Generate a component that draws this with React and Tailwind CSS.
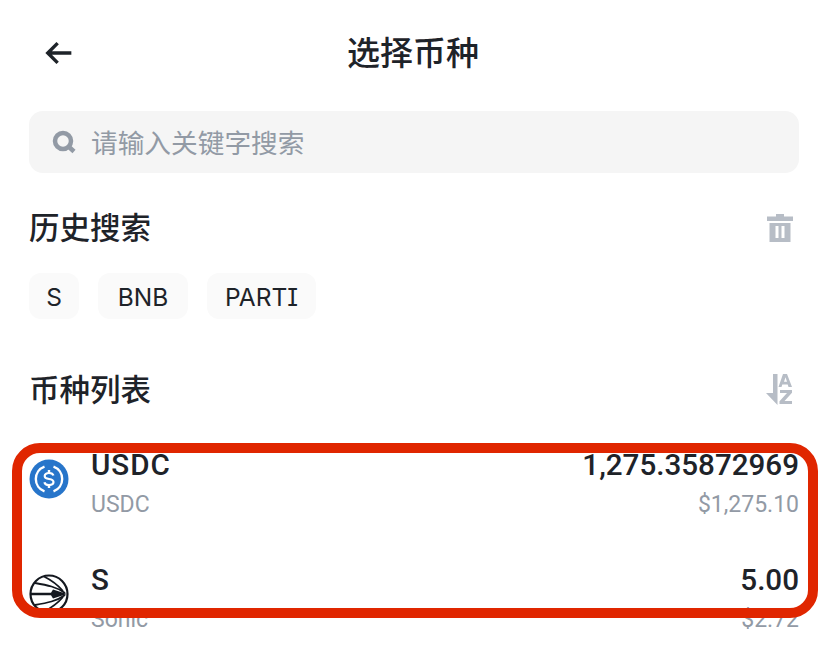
import React from 'react';

const cjk = "font-['Inter','Noto_Sans_CJK_SC',sans-serif]";

const UsdcIcon = () => (
  <svg viewBox="0 0 40 40" className="w-10 h-10 shrink-0">
    <circle cx="20" cy="20" r="19.5" fill="#2775ca" />
    <path d="M15.5 7.6a13.2 13.2 0 0 0 0 24.8" fill="none" stroke="#fff" strokeWidth="2.4" />
    <path d="M24.5 7.6a13.2 13.2 0 0 1 0 24.8" fill="none" stroke="#fff" strokeWidth="2.4" />
    <path d="M24.4 16.6c-.4-1.7-2-2.6-4.4-2.6-2.600 0-4.300 1.200-4.300 3 0 2 1.700 2.600 4.300 3 2.700.4 4.500 1.100 4.500 3.100 0 1.900-1.900 3-4.500 3-2.500 0-4.200-1-4.600-2.800" fill="none" stroke="#fff" strokeWidth="2.200" />
    <path d="M20 11v3M20 26v3" stroke="#fff" strokeWidth="2.400" />
  </svg>
);

const SonicIcon = () => (
  <svg viewBox="0 0 40 40" className="w-10 h-10 shrink-0">
    <circle cx="20" cy="20" r="18.500" fill="#fff" stroke="#14181f" strokeWidth="2.200" />
    <path d="M38 20 24 15.500 22 18.800H2v2.400h20l2 3.300z" fill="#14181f" />
    <path d="M36 19C28 13 18 11 6 9M36 21C28 27 18 29 6 31" fill="none" stroke="#14181f" strokeWidth="1.800" />
    <path d="M34 17C28 10 22 6 15 2.500M34 23C28 30 22 34 15 37.500" fill="none" stroke="#14181f" strokeWidth="1.800" />
  </svg>
);

const tags = [
  { label: 'S', width: 'w-[50px]' },
  { label: 'BNB', width: 'w-[90px]' },
  { label: 'PARTI', width: 'w-[109px]' },
];

const coins = [
  { symbol: 'USDC', name: 'USDC', amount: '1,275.35872969', value: '$1,275.10', icon: <UsdcIcon /> },
  { symbol: 'S', name: 'Sonic', amount: '5.00', value: '$2.72', icon: <SonicIcon /> },
];

const App = () => {
  return (
    <div className={`relative w-[828px] h-[656px] overflow-hidden bg-white text-[#1e2329] ${cjk}`}>
      <header className="relative h-[106px] flex items-center justify-center">
        <svg viewBox="0 0 32 28" className="absolute left-[43px] top-[41px] w-[31px] h-[24px]" fill="none" stroke="#1e2329" strokeWidth="4">
          <path d="M31 14H4M15 2.500 3.500 14 15 25.500" />
        </svg>
        <h1 className="text-[33px] font-medium leading-none pr-[2px]">选择币种</h1>
      </header>

      <div className="mx-[29px] h-[62px] mt-[5px] rounded-[14px] bg-[#f5f5f5] flex items-center px-[23px] gap-[15px]">
        <svg viewBox="0 0 24 24" className="w-[24px] h-[24px]" fill="none" stroke="#929aa5" strokeWidth="4.500">
          <circle cx="11" cy="11" r="8" />
          <path d="m16.500 16.500 5.500 5" />
        </svg>
        <span className="text-[26.700px] text-[#929aa5] pt-[3px]">请输入关键字搜索</span>
      </div>

      <section className="mx-[29px] mt-[32px] flex items-center justify-between h-[46px]">
        <h2 className="text-[30.500px] font-medium leading-none">历史搜索</h2>
        <svg viewBox="0 0 26 28" className="w-[26px] h-[28px] mr-[6px]" fill="#b7bdc6">
          <path d="M9 0h8v2.500h9V7H0V2.500h9z" />
          <path fillRule="evenodd" d="M2.500 9h21v19h-21zM8.500 12v12h3V12zM14.500 12v12h3V12z" />
        </svg>
      </section>

      <div className="mx-[29px] mt-[22px] flex gap-[19px]">
        {tags.map((tag) => (
          <span key={tag.label} className={`${tag.width} h-[46px] pt-[3px] rounded-[12px] bg-[#fafafa] flex items-center justify-center text-[24.500px] [font-feature-settings:'cv08']`}>
            {tag.label}
          </span>
        ))}
      </div>

      <section className="mx-[29px] mt-[48px] flex items-center justify-between h-[46px]">
        <h2 className="text-[30.500px] font-medium leading-none">币种列表</h2>
        <svg viewBox="0 0 28 32" className="w-[28px] h-[32px] mr-[6px] -mt-[2px]" fill="#b7bdc6">
          <path d="M8 1h4.500v31L1 20h7z" />
          <path fillRule="evenodd" d="M18 1h4l5 13h-3.500l-.8-2.500h-5.400L16.500 14H13.500zM19 8.800h3l-1.500-4.500z" />
          <path d="M15 17h12v2.800L19.500 28H27v3H14.500v-2.800L22 20h-7z" />
        </svg>
      </section>

      <ul className="mx-[29px] mt-[28px]">
        {coins.map((coin) => (
          <li key={coin.symbol} className="h-[115px] flex items-start gap-[22px]">
            <div className="pt-[18px]">{coin.icon}</div>
            <div className="flex-1 mt-[5px] font-['Roboto','Noto_Sans_CJK_SC',sans-serif]">
              <div className="flex justify-between items-baseline text-[29.600px] font-medium leading-[38px]">
                <span className="tracking-[1px]">{coin.symbol}</span>
                <span>{coin.amount}</span>
              </div>
              <div className="flex justify-between items-baseline text-[23px] leading-[38px] mt-[2px] text-[#929aa5]">
                <span>{coin.name}</span>
                <span>{coin.value}</span>
              </div>
            </div>
          </li>
        ))}
      </ul>

      <div className="absolute left-[12px] top-[443px] w-[806px] h-[175px] rounded-[28px] border-[10px] border-[#e02600]" />
    </div>
  );
};

export default App;
